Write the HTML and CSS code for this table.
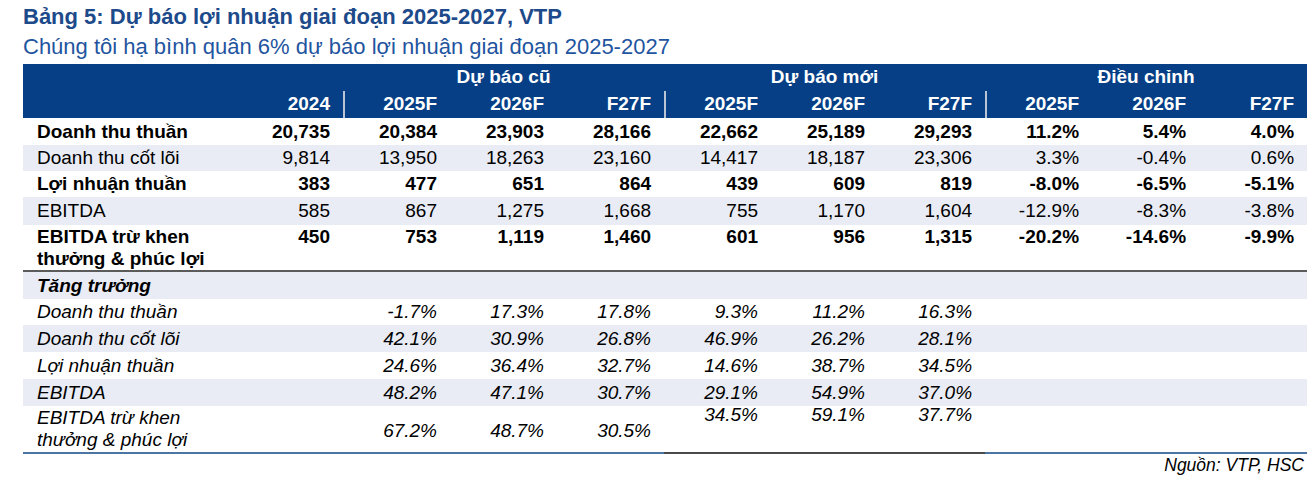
FILE: index.html
```html
<!DOCTYPE html>
<html lang="vi">
<head>
<meta charset="utf-8">
<title>Bảng 5</title>
<link rel="stylesheet" href="styles.css">
</head>
<body>
<div class="page">
  <h1 class="title">Bảng 5: Dự báo lợi nhuận giai đoạn 2025-2027, VTP</h1>
  <p class="subtitle">Chúng tôi hạ bình quân 6% dự báo lợi nhuận giai đoạn 2025-2027</p>
  <table class="tbl">
    <colgroup>
      <col class="c-label">
      <col class="c-num"><col class="c-num"><col class="c-num"><col class="c-num"><col class="c-num">
      <col class="c-num"><col class="c-num"><col class="c-num"><col class="c-num"><col class="c-last">
    </colgroup>
    <thead>
      <tr class="h1">
        <th></th><th></th>
        <th colspan="3">Dự báo cũ</th>
        <th colspan="3">Dự báo mới</th>
        <th colspan="3">Điều chỉnh</th>
      </tr>
      <tr class="h2">
        <th></th>
        <th class="n">2024</th>
        <th class="n sep">2025F</th><th class="n">2026F</th><th class="n">F27F</th>
        <th class="n sep">2025F</th><th class="n">2026F</th><th class="n">F27F</th>
        <th class="n sep">2025F</th><th class="n">2026F</th><th class="n">F27F</th>
      </tr>
    </thead>
    <tbody>
      <tr class="r b r27">
        <td class="lbl">Doanh thu thuần</td>
        <td class="n">20,735</td><td class="n">20,384</td><td class="n">23,903</td><td class="n">28,166</td>
        <td class="n">22,662</td><td class="n">25,189</td><td class="n">29,293</td>
        <td class="n">11.2%</td><td class="n">5.4%</td><td class="n">4.0%</td>
      </tr>
      <tr class="r g r26">
        <td class="lbl">Doanh thu cốt lõi</td>
        <td class="n">9,814</td><td class="n">13,950</td><td class="n">18,263</td><td class="n">23,160</td>
        <td class="n">14,417</td><td class="n">18,187</td><td class="n">23,306</td>
        <td class="n">3.3%</td><td class="n">-0.4%</td><td class="n">0.6%</td>
      </tr>
      <tr class="r b r26">
        <td class="lbl">Lợi nhuận thuần</td>
        <td class="n">383</td><td class="n">477</td><td class="n">651</td><td class="n">864</td>
        <td class="n">439</td><td class="n">609</td><td class="n">819</td>
        <td class="n">-8.0%</td><td class="n">-6.5%</td><td class="n">-5.1%</td>
      </tr>
      <tr class="r g r28">
        <td class="lbl">EBITDA</td>
        <td class="n">585</td><td class="n">867</td><td class="n">1,275</td><td class="n">1,668</td>
        <td class="n">755</td><td class="n">1,170</td><td class="n">1,604</td>
        <td class="n">-12.9%</td><td class="n">-8.3%</td><td class="n">-3.8%</td>
      </tr>
      <tr class="r b two top">
        <td class="lbl">EBITDA trừ khen<br>thưởng &amp; phúc lợi</td>
        <td class="n">450</td><td class="n">753</td><td class="n">1,119</td><td class="n">1,460</td>
        <td class="n">601</td><td class="n">956</td><td class="n">1,315</td>
        <td class="n">-20.2%</td><td class="n">-14.6%</td><td class="n">-9.9%</td>
      </tr>
      <tr class="r g section">
        <td class="lbl bi">Tăng trưởng</td>
        <td></td><td></td><td></td><td></td><td></td><td></td><td></td><td></td><td></td><td></td>
      </tr>
      <tr class="r i r26">
        <td class="lbl">Doanh thu thuần</td>
        <td class="n"></td><td class="n">-1.7%</td><td class="n">17.3%</td><td class="n">17.8%</td>
        <td class="n">9.3%</td><td class="n">11.2%</td><td class="n">16.3%</td>
        <td></td><td></td><td></td>
      </tr>
      <tr class="r g i r27">
        <td class="lbl">Doanh thu cốt lõi</td>
        <td class="n"></td><td class="n">42.1%</td><td class="n">30.9%</td><td class="n">26.8%</td>
        <td class="n">46.9%</td><td class="n">26.2%</td><td class="n">28.1%</td>
        <td></td><td></td><td></td>
      </tr>
      <tr class="r i r27">
        <td class="lbl">Lợi nhuận thuần</td>
        <td class="n"></td><td class="n">24.6%</td><td class="n">36.4%</td><td class="n">32.7%</td>
        <td class="n">14.6%</td><td class="n">38.7%</td><td class="n">34.5%</td>
        <td></td><td></td><td></td>
      </tr>
      <tr class="r g i r27">
        <td class="lbl">EBITDA</td>
        <td class="n"></td><td class="n">48.2%</td><td class="n">47.1%</td><td class="n">30.7%</td>
        <td class="n">29.1%</td><td class="n">54.9%</td><td class="n">37.0%</td>
        <td></td><td></td><td></td>
      </tr>
      <tr class="r i two last">
        <td class="lbl">EBITDA trừ khen<br>thưởng &amp; phúc lợi</td>
        <td class="n"></td><td class="n mid">67.2%</td><td class="n mid">48.7%</td><td class="n mid">30.5%</td>
        <td class="n topc dark">34.5%</td><td class="n topc dark">59.1%</td><td class="n topc dark">37.7%</td>
        <td></td><td></td><td></td>
      </tr>
    </tbody>
  </table>
  <p class="source">Nguồn: VTP, HSC</p>
</div>
</body>
</html>
```

FILE: styles.css
```css
html, body {
  margin: 0;
  padding: 0;
  background: #ffffff;
}

body {
  font-family: "Liberation Sans", Arial, sans-serif;
  color: #000000;
}

.page {
  padding: 4px 4px 0 23px;
  width: 1285px;
}

.title {
  margin: 0;
  font-size: 22px;
  line-height: 26px;
  font-weight: bold;
  color: #1d4a8a;
}

.subtitle {
  margin: 4px 0 0 0;
  font-size: 22px;
  line-height: 26px;
  color: #1f55a0;
}

.tbl {
  margin-top: 4px;
  width: 1284px;
  border-collapse: collapse;
  table-layout: fixed;
  font-size: 19px;
}

.c-label { width: 213px; }
.c-num { width: 107px; }
.c-last { width: 108px; }

.tbl th,
.tbl td {
  padding: 0;
  white-space: nowrap;
}

.tbl thead tr {
  background: #063f86;
  color: #ffffff;
}

.tbl th {
  font-weight: bold;
  text-align: center;
}

.h1 th {
  height: 25px;
  line-height: 24px;
  vertical-align: middle;
}

.h2 th {
  height: 29px;
  line-height: 24px;
  vertical-align: middle;
  padding-top: 1px;
  box-sizing: border-box;
}

.tbl .n {
  text-align: right;
  padding-right: 13px;
}

.h2 .sep {
  background-image: linear-gradient(#b9c4d5, #b9c4d5);
  background-repeat: no-repeat;
  background-size: 2px 27px;
  background-position: 0 2px;
}

.tbl td {
  line-height: 22px;
  vertical-align: middle;
}

.lbl {
  padding-left: 14px !important;
}

.r.b td {
  font-weight: bold;
}

.r.g {
  background: #e9ecf4;
}

.r.i td {
  font-style: italic;
}

.r26 td { height: 26px; }
.r27 td { height: 27px; }
.r28 td { height: 28px; }

.two td {
  height: 43px;
  vertical-align: top;
  padding-top: 1px;
}

.two.top {
  border-bottom: 2px solid #5b5b5b;
}

.section td {
  height: 27px;
}

.lbl.bi {
  font-weight: bold;
  font-style: italic;
}

.last td {
  height: 43px;
  padding-top: 1px;
  border-bottom: 2px solid #4b76a3;
}

.last td.mid {
  vertical-align: middle;
  padding-top: 3px;
}

.last td.topc {
  padding-top: 0;
  line-height: 18px;
}

.last td.dark {
  border-bottom-color: #4a4a4a;
}

.source {
  margin: 0;
  text-align: right;
  font-style: italic;
  font-size: 17.5px;
  line-height: 22px;
  padding-right: 4px;
}
```
